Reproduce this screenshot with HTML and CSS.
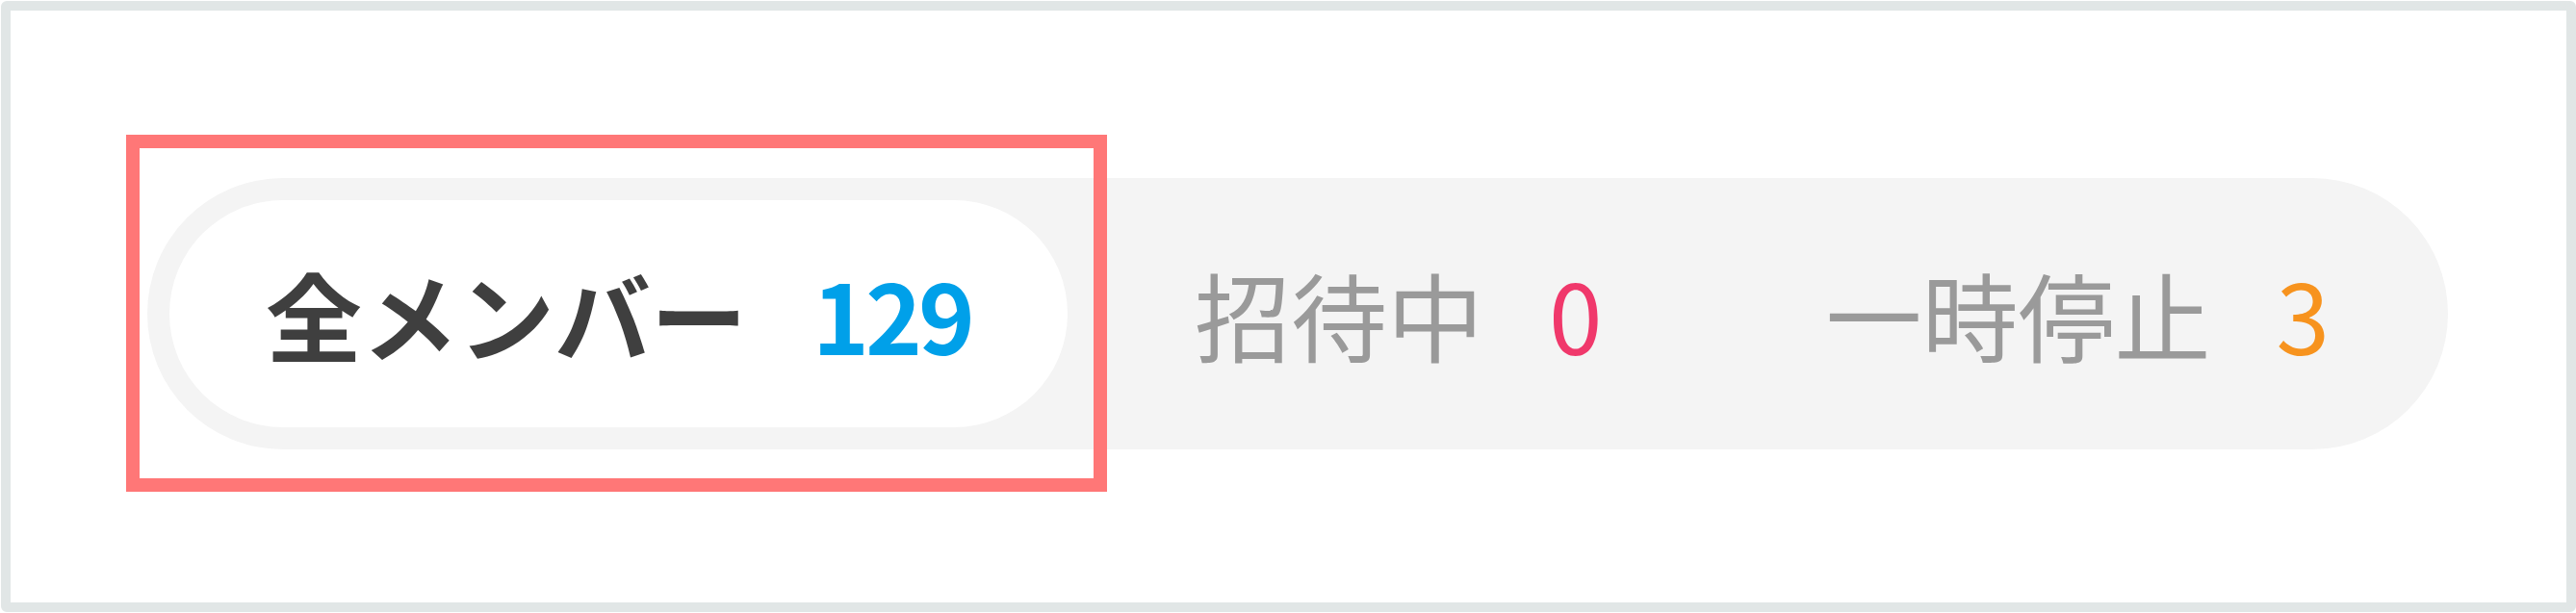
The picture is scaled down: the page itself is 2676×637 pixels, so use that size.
FILE: index.html
```html
<!DOCTYPE html>
<html lang="ja">
<head>
<meta charset="utf-8">
<title>メンバー</title>
<link rel="stylesheet" href="styles.css">
</head>
<body>
<div class="frame">
  <div class="tabs">
    <div class="tab tab-active">
      <span class="label">全メンバー</span><span class="count count-blue">129</span>
    </div>
    <div class="tab">
      <span class="label">招待中</span><span class="count count-red">0</span>
    </div>
    <div class="tab">
      <span class="label">一時停止</span><span class="count count-orange">3</span>
    </div>
  </div>
  <div class="highlight"></div>
</div>
</body>
</html>
```
FILE: styles.css
```css
html, body {
  margin: 0;
  padding: 0;
  background: #ffffff;
}
body {
  font-family: "Noto Sans CJK JP", "Noto Sans", sans-serif;
}
.frame {
  position: relative;
  box-sizing: border-box;
  margin: 1px 0 0 1px;
  width: 2675px;
  height: 635px;
  border: 10px solid #e1e6e6;
  border-radius: 6px;
  background: #ffffff;
  padding: 174px 0 0 142px;
}
.tabs {
  display: inline-flex;
  align-items: center;
  gap: 32px;
  padding: 23px;
  background: #f4f4f4;
  border-radius: 141px;
}
.tab {
  display: flex;
  align-items: baseline;
  justify-content: center;
  height: 236px;
  line-height: 236px;
  padding: 0 100px;
  border-radius: 118px;
  font-size: 100px;
  color: #9a9a9a;
  font-weight: 400;
  white-space: nowrap;
}
.tab-active {
  background: #ffffff;
  color: #3f3f3f;
  font-weight: 700;
}
.count {
  margin-left: 68px;
}
.count-blue {
  color: #00a0e9;
  letter-spacing: -4px;
}
.count-red { color: #f0386b; }
.count-orange { color: #f7931e; }
.highlight {
  position: absolute;
  left: 120px;
  top: 129px;
  width: 1019px;
  height: 371px;
  box-sizing: border-box;
  border: 14px solid #ff7777;
}
```
